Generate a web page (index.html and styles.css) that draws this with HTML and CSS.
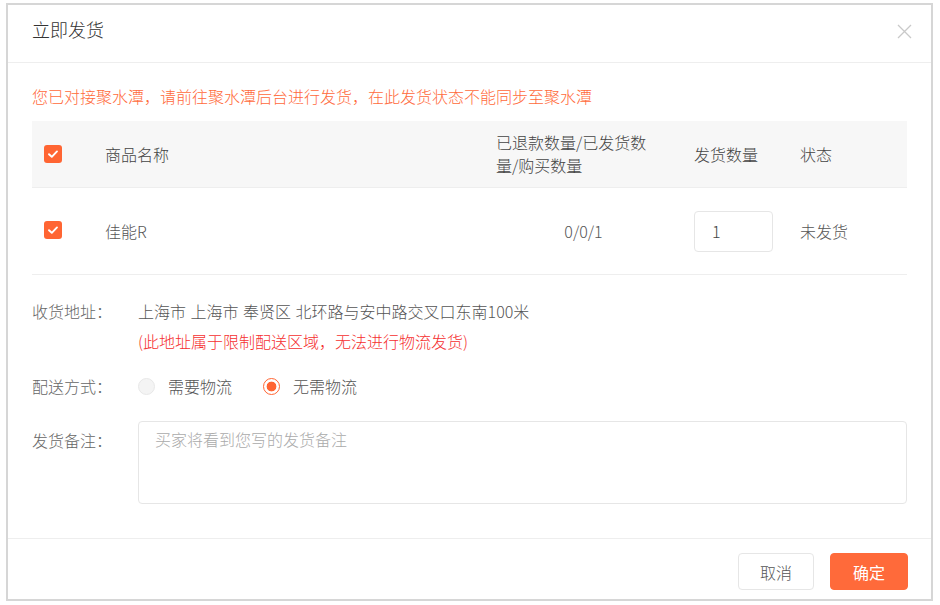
FILE: index.html
```html
<!DOCTYPE html>
<html lang="zh-CN">
<head>
<meta charset="utf-8">
<title>立即发货</title>
<link rel="stylesheet" href="styles.css">
</head>
<body>
<div class="page">
  <div class="dialog">
    <div class="dialog-header">
      <div class="dialog-title">立即发货</div>
      <span class="close" aria-label="关闭">
        <svg width="15" height="15" viewBox="0 0 15 15"><path d="M1 1L14 14M14 1L1 14" stroke="#c9c9c9" stroke-width="1.3" fill="none"/></svg>
      </span>
    </div>
    <div class="dialog-body">
      <div class="warning">您已对接聚水潭，请前往聚水潭后台进行发货，在此发货状态不能同步至聚水潭</div>
      <div class="table">
        <div class="tr thead">
          <div class="td c1"><span class="checkbox"><svg width="12" height="10" viewBox="0 0 12 10"><path d="M2 5.2L4.8 7.8L10 2.4" stroke="#fff" stroke-width="1.9" fill="none" stroke-linecap="round" stroke-linejoin="round"/></svg></span></div>
          <div class="td c2">商品名称</div>
          <div class="td c3 h3">已退款数量/已发货数量/购买数量</div>
          <div class="td c4">发货数量</div>
          <div class="td c5">状态</div>
        </div>
        <div class="tr tbody">
          <div class="td c1"><span class="checkbox"><svg width="12" height="10" viewBox="0 0 12 10"><path d="M2 5.2L4.8 7.8L10 2.4" stroke="#fff" stroke-width="1.9" fill="none" stroke-linecap="round" stroke-linejoin="round"/></svg></span></div>
          <div class="td c2">佳能R</div>
          <div class="td c3 d3">0/0/1</div>
          <div class="td c4"><div class="qty">1</div></div>
          <div class="td c5">未发货</div>
        </div>
      </div>
      <div class="form">
        <div class="form-row">
          <div class="label">收货地址：</div>
          <div class="value">
            <div class="addr">上海市 上海市 奉贤区 北环路与安中路交叉口东南100米</div>
            <div class="danger">(此地址属于限制配送区域，无法进行物流发货)</div>
          </div>
        </div>
        <div class="form-row delivery">
          <div class="label">配送方式：</div>
          <div class="value radios">
            <span class="radio"><span class="circle disabled"></span><span>需要物流</span></span>
            <span class="radio"><span class="circle checked"></span><span>无需物流</span></span>
          </div>
        </div>
        <div class="form-row remark">
          <div class="label">发货备注：</div>
          <div class="value"><div class="textarea">买家将看到您写的发货备注</div></div>
        </div>
      </div>
    </div>
    <div class="dialog-footer">
      <button class="btn">取消</button>
      <button class="btn primary">确定</button>
    </div>
  </div>
</div>
</body>
</html>
```
FILE: styles.css
```css
* { box-sizing: border-box; }
html, body { margin: 0; padding: 0; background: #fff; }
body {
  font-family: "Noto Sans CJK SC", "Noto Sans", sans-serif;
  font-size: 16px;
  font-weight: 300;
  color: #555;
}
.page { padding: 3px 0 0 6px; }
.dialog {
  width: 927px;
  height: 598px;
  border: 2px solid #d6d6d6;
  background: #fff;
  display: flex;
  flex-direction: column;
}
.dialog-header {
  height: 58px;
  border-bottom: 1px solid #eeeeee;
  display: flex;
  align-items: flex-start;
  justify-content: space-between;
  padding: 9px 19px 0 24px;
}
.dialog-title {
  font-size: 18px;
  line-height: 30px;
  color: #333;
  font-weight: 300;
}
.close { display: flex; margin-top: 10px; }
.dialog-body {
  flex: 1;
  padding: 0 24px 0 24px;
}
.warning {
  color: #ff6a3b;
  line-height: 24px;
  margin-top: 21px;
}
.table { margin-top: 13px; }
.tr { display: flex; align-items: center; }
.thead { background: #f7f7f7; height: 67px; border-bottom: 1px solid #eeeeee; color: #444; }
.tbody { height: 87px; border-bottom: 1px solid #eeeeee; }
.td { padding-left: 12px; }
.c1 { width: 61px; display: flex; }
.c2 { width: 391px; }
.c3 { width: 198px; }
.h3 { padding-right: 24px; line-height: 23px; }
.d3 { text-align: center; padding-right: 11px; }
.c4 { width: 106px; }
.c5 { width: 118px; }
.checkbox {
  width: 18px; height: 18px;
  border-radius: 3px;
  background: #ff6533;
  display: flex; align-items: center; justify-content: center;
}
.tbody .checkbox { margin-top: -2px; }
.qty {
  width: 79px; height: 41px;
  border: 1px solid #e6e6e6;
  border-radius: 4px;
  padding-left: 17px;
  line-height: 39px;
  color: #444;
}
.form { margin-top: 21px; }
.form-row { display: flex; line-height: 30px; }
.label { width: 106px; color: #666; flex-shrink: 0; }
.value { flex: 1; color: #555; }
.addr { word-spacing: 1px; }
.danger { color: #f52f2f; }
.delivery { margin-top: 15px; }
.radios { display: flex; align-items: center; gap: 31px; }
.radio { display: flex; align-items: center; gap: 13px; color: #555; }
.circle {
  width: 17px; height: 17px;
  border-radius: 50%;
  display: inline-block;
}
.circle.disabled { background: #f4f4f4; border: 1px solid #e8e8e8; }
.circle.checked {
  border: 1.5px solid #ff6533;
  background: radial-gradient(circle, #ff6533 0 4.6px, #fff 5.2px);
}
.remark { margin-top: 20px; }
.remark .label { margin-top: 4px; }
.textarea {
  height: 83px;
  border: 1px solid #e6e6e6;
  border-radius: 4px;
  padding: 7px 16px;
  line-height: 20px;
  color: #aaa;
}
.dialog-footer {
  height: 61px;
  border-top: 1px solid #eeeeee;
  display: flex;
  justify-content: flex-end;
  align-items: flex-start;
  gap: 16px;
  padding: 14px 23px 0 0;
}
.btn {
  font-family: inherit;
  font-size: 16px;
  font-weight: 300;
  height: 37px;
  width: 76px;
  border: 1px solid #e6e6e6;
  border-radius: 4px;
  background: #fff;
  color: #555;
  padding: 0;
}
.btn.primary {
  width: 78px;
  background: #ff6a3a;
  border-color: #ff6a3a;
  color: #fff;
  font-weight: 400;
}
```
